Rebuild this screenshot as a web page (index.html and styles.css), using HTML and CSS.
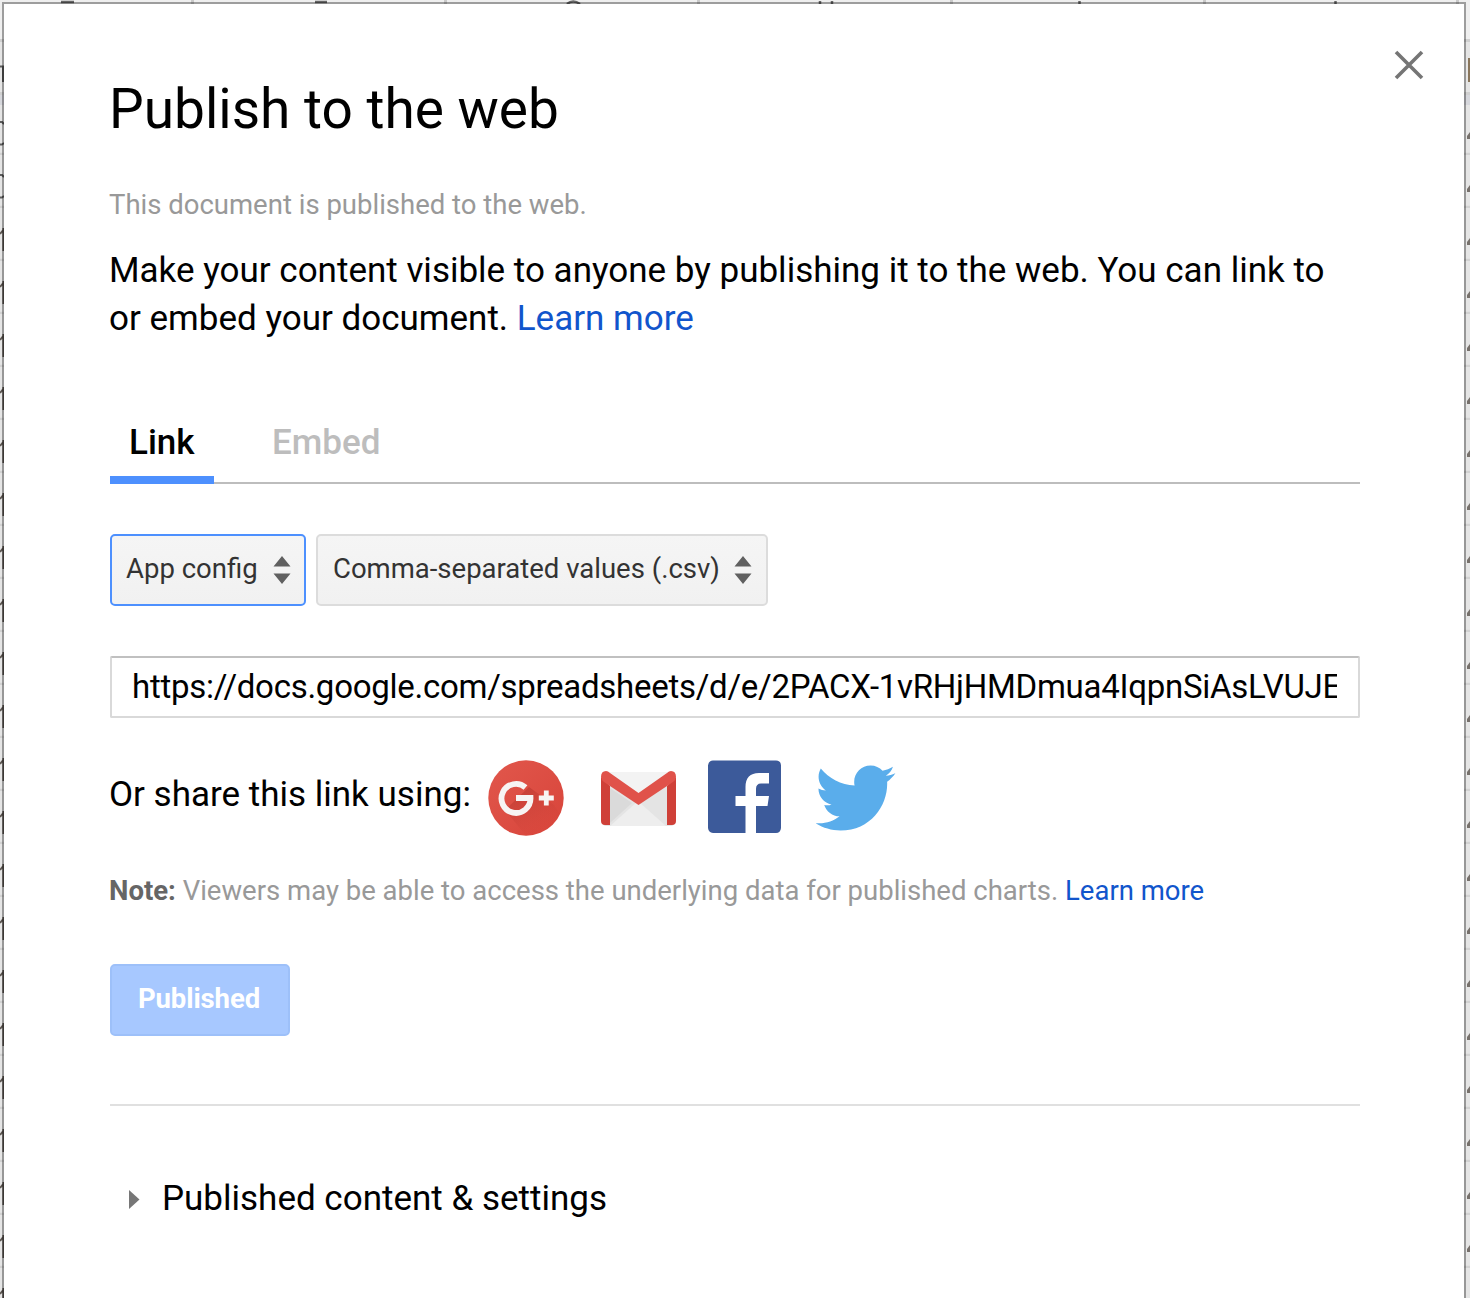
FILE: index.html
```html
<!DOCTYPE html>
<html lang="en">
<head>
<meta charset="utf-8">
<title>Publish to the web</title>
<link rel="stylesheet" href="styles.css">
</head>
<body>
<svg class="sheet" width="1470" height="1298" viewBox="0 0 1470 1298" aria-hidden="true">
  <defs>
    <pattern id="rows" x="0" y="49" width="1470" height="53" patternUnits="userSpaceOnUse">
      <path d="M0 52H1470" stroke="#d2d2d2" stroke-width="2.5"/>
    </pattern>
    <pattern id="ones" x="0" y="218" width="6" height="53" patternUnits="userSpaceOnUse">
      <path d="M0 16L4 11M3.400 10V33" stroke="#5c5651" stroke-width="2" fill="none"/>
    </pattern>
    <pattern id="edges" x="1466" y="124" width="4" height="53" patternUnits="userSpaceOnUse">
      <path d="M1 15V12L4 8V15Z" fill="#77716c"/>
    </pattern>
  </defs>
  <rect width="1470" height="1298" fill="#e5e5e5"/>
  <rect width="1470" height="40" fill="#efefef"/>
  <path d="M0 40.500H1470" stroke="#d0d0d0" stroke-width="3"/>
  <rect y="95" width="1470" height="10" fill="#d6d7dc"/>
  <path d="M0 93.500H1470" stroke="#d0d0d0" stroke-width="3"/>
  <rect y="105" width="1470" height="1193" fill="url(#rows)"/>
  <path d="M192.500 0V5M445.500 0V5M698.500 0V5M951.500 0V5M1204.500 0V5M1457.500 0V5" stroke="#c9c9c9" stroke-width="3"/>
  <path d="M61 2H74M315 2H327M567 4Q573 -1 580 4M820 1V5M832 1V5M1079.500 1V5M1335.500 1V5" stroke="#666" stroke-width="2.500" fill="none"/>
  <path d="M0 66.500H4M3 66V82M0 122H2L4 124M0 144.500H2L4 143M0 175H2L4 177M0 197.500H2L4 196" stroke="#5c5c5c" stroke-width="2" fill="none"/>
  <rect y="218" width="4" height="1080" fill="url(#ones)"/>
  <rect x="1466" y="124" width="4" height="1174" fill="url(#edges)"/>
  <path d="M1469 58V82" stroke="#8a765c" stroke-width="2"/>
</svg>
<main class="dialog">
  <button class="close" aria-label="Close"><svg width="30" height="30" viewBox="0 0 30 30"><path d="M2 2L28 28M28 2L2 28" stroke="#757575" stroke-width="3.600"/></svg></button>
  <h1 class="title">Publish to the web</h1>
  <p class="status">This document is published to the web.</p>
  <p class="intro">Make your content visible to anyone by publishing it to the web. You can link to<br>or embed your document. <a class="link">Learn more</a></p>
  <nav class="tabs">
    <span class="tab active">Link</span>
    <span class="tab">Embed</span>
  </nav>
  <div class="selects">
    <div class="select focused"><span>App config</span><svg class="arrows" width="18" height="28" viewBox="0 0 18 28"><path d="M.5 10.500L9 0L17.500 10.500ZM.5 17.500H17.500L9 28Z"/></svg></div>
    <div class="select wide"><span>Comma-separated values (.csv)</span><svg class="arrows" width="18" height="28" viewBox="0 0 18 28"><path d="M.5 10.500L9 0L17.500 10.500ZM.5 17.500H17.500L9 28Z"/></svg></div>
  </div>
  <div class="url"><div class="url-text">https://docs.google.com/spreadsheets/d/e/2PACX-1vRHjHMDmua4IqpnSiAsLVUJE</div></div>
  <div class="share">
    <span class="share-label">Or share this link using:</span>
    <svg class="gplus" width="76" height="76" viewBox="0 0 76 76">
      <defs>
        <linearGradient id="red" x1="0" y1="0" x2="1" y2="1"><stop offset="0" stop-color="#e1574c"/><stop offset="1" stop-color="#d8443a"/></linearGradient>
        <linearGradient id="shade" x1="0" y1="0" x2=".6" y2="1"><stop offset="0" stop-color="#b5352d" stop-opacity=".8"/><stop offset="1" stop-color="#d0443a" stop-opacity="0"/></linearGradient>
      </defs>
      <circle cx="38" cy="38" r="37.700" fill="url(#red)"/>
      <path d="M17 50L41 27L66 45L72 54Q60 76 38 75.700Z" fill="url(#shade)"/>
      <path d="M37.500 27.500A14.500 14.500 0 1 0 42.500 38H28" fill="none" stroke="#f7f4f3" stroke-width="5.800"/>
      <path d="M58.300 30.500V45.500M50.800 38H65.800" stroke="#f7f4f3" stroke-width="4.800"/>
    </svg>
    <svg class="gmail" width="75" height="76" viewBox="0 0 75 76">
      <rect x="2" y="12" width="71" height="54" rx="3" fill="#e4e4e4"/>
      <path d="M5 12H70L37.500 36Z" fill="#f3f3f3"/>
      <path d="M9 28V63L31 43Z" fill="#dadada"/>
      <path d="M9 66L37 41L65 66Z" fill="#eee"/>
      <path d="M0 17L9 26V65H4Q0 65 0 61ZM75 17L66 26V65H71Q75 65 75 61Z" fill="#cf4038"/>
      <path d="M0 17Q0 11 5 11Q7 11 9 13L37.500 33L66 13Q68 11 70 11Q75 11 75 17Q75 20 72 22L37.500 45L3 22Q0 20 0 17Z" fill="#e0524a"/>
    </svg>
    <svg class="facebook" width="73" height="76" viewBox="0 0 73 76">
      <path d="M5 .5H68Q73 1 73 5.500V68Q72.500 73 68 73H48V46H59.500L61 36H48V29Q48 23.500 53 23.500H61V13H51Q37.500 13 37.500 27V36H27.500V46H37.500V73H5Q.5 72.500 0 68V5.500Q.5 1 5 .5Z" fill="#3c5a9a"/>
    </svg>
    <svg class="twitter" width="80" height="76" viewBox="0.2 .6 24 22.800">
      <path fill="#5aadeb" d="M23.954 4.569c-.885.389-1.830.654-2.825.775 1.014-.611 1.794-1.574 2.163-2.723-.951.555-2.005.959-3.127 1.184-.896-.959-2.173-1.559-3.591-1.559-2.717 0-4.920 2.203-4.920 4.917 0 .39.045.765.127 1.124C7.691 8.094 4.066 6.130 1.640 3.161c-.427.722-.666 1.561-.666 2.475 0 1.710.87 3.213 2.188 4.096-.807-.026-1.566-.248-2.228-.616v.061c0 2.385 1.693 4.374 3.946 4.827-.413.111-.849.171-1.296.171-.314 0-.615-.03-.916-.086.631 1.953 2.445 3.377 4.604 3.417-1.680 1.319-3.809 2.105-6.102 2.105-.39 0-.779-.023-1.170-.067 2.189 1.394 4.768 2.209 7.557 2.209 9.054 0 13.999-7.496 13.999-13.986 0-.209 0-.42-.015-.63.961-.689 1.800-1.560 2.460-2.548z"/>
    </svg>
  </div>
  <p class="note"><b>Note:</b> Viewers may be able to access the underlying data for published charts. <a class="link">Learn more</a></p>
  <button class="published">Published</button>
  <div class="settings">
    <svg width="12" height="20" viewBox="0 0 12 20"><path d="M1 1L11.500 10.500L1 20Z" fill="#777"/></svg>
    <span>Published content &amp; settings</span>
  </div>
</main>
</body>
</html>
```
FILE: styles.css
```css
* { box-sizing: border-box; }
body {
  margin: 0;
  height: 1298px;
  overflow: hidden;
  position: relative;
  background: #e5e5e5;
  font-family: Roboto, "Liberation Sans", sans-serif;
  color: #000;
}
.sheet { position: absolute; left: 0; top: 0; }
.dialog {
  position: relative;
  width: 1464px;
  height: 1310px;
  margin: 2px 0 0 2px;
  padding: 73px 104px 0 106px;
  border: 2px solid rgba(0, 0, 0, .34);
  background: #fff;
  background-clip: padding-box;
}
.close {
  position: absolute;
  right: 40px;
  top: 46px;
  padding: 0;
  border: 0;
  background: none;
  line-height: 0;
}
.title { margin: 0 0 0 -1px; font-size: 55px; line-height: 64px; font-weight: 400; }
.status { margin: 46px 0 0 -1px; font-size: 27.5px; line-height: 36px; color: #999; }
.intro { margin: 24px 0 0 -1px; font-size: 35px; line-height: 48px; white-space: nowrap; }
.link { color: #15c; }
.tabs {
  display: flex;
  margin-top: 75px;
  height: 66px;
  border-bottom: 2px solid #bdbdbd;
  font-size: 35px;
  line-height: 49px;
  font-weight: 500;
}
.tab { height: 66px; padding: 0 20px; margin-right: 38px; color: #bdbdbd; }
.tab.active { width: 104px; padding-left: 19px; color: #000; border-bottom: 8px solid #4d90fe; }
.selects { display: flex; gap: 10px; margin-top: 50px; }
.select {
  display: flex;
  justify-content: space-between;
  width: 196px;
  height: 72px;
  padding: 0 13px 0 14px;
  border: 2px solid #dcdcdc;
  border-radius: 5px;
  background: linear-gradient(#f5f5f5, #f1f1f1);
  color: #333;
  font-size: 27.5px;
  line-height: 66px;
  white-space: nowrap;
}
.select.wide { width: 452px; padding: 0 14px 0 15px; }
.select.focused { border-color: #4d90fe; }
.arrows { margin-top: 20px; fill: #606060; }
.url {
  margin-top: 50px;
  height: 62px;
  padding: 0 20px 0 20px;
  border: 2px solid #d9d9d9;
  border-top-color: #c0c0c0;
  border-radius: 2px;
  font-size: 33px;
  line-height: 58px;
  letter-spacing: -.27px;
}
.url-text { width: 1205px; overflow: hidden; white-space: nowrap; }
.share { display: flex; margin: 42px 0 0 -1px; height: 76px; font-size: 35px; }
.share-label { width: 379px; margin-top: 10px; line-height: 49px; white-space: nowrap; }
.gmail { margin-left: 37px; }
.facebook { margin-left: 32px; }
.twitter { margin-left: 35px; }
.note { margin: 37px 0 0 -1px; font-size: 27.5px; line-height: 36px; color: #999; white-space: nowrap; }
.note b { color: #666; font-weight: 700; }
.published {
  display: block;
  width: 180px;
  height: 72px;
  margin-top: 55px;
  padding: 0 2px 2px 0;
  border: 2px solid #9dc0f9;
  border-radius: 5px;
  background: #a7c8ff;
  color: #fff;
  font: 700 27.5px/66px Roboto, sans-serif;
  letter-spacing: -.1px;
}
.settings {
  display: flex;
  align-items: center;
  gap: 22px;
  margin-top: 68px;
  padding: 69px 0 0 18px;
  border-top: 2px solid #e0e0e0;
  font-size: 35px;
  line-height: 48px;
}
```
